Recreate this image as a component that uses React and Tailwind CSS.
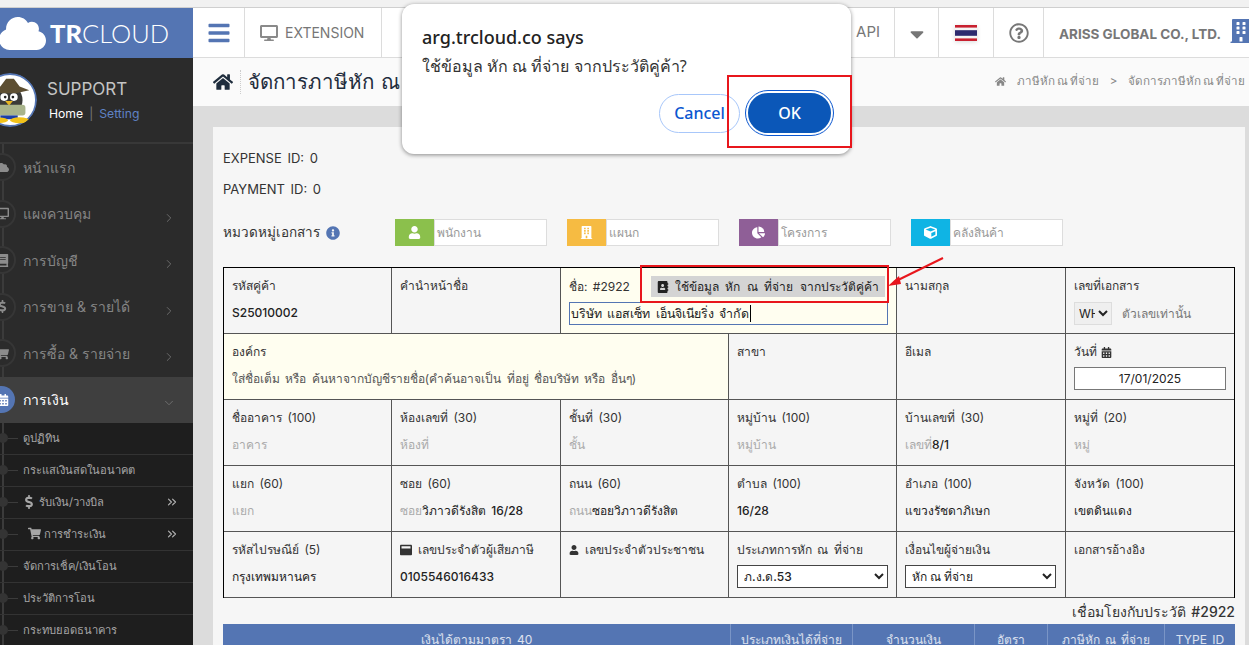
import React from "react";
import {
  FaBars, FaDesktop, FaCaretDown, FaRegQuestionCircle, FaBuilding, FaHome, FaUser, FaChartPie, FaCube,
  FaInfoCircle, FaCalendarAlt, FaShoppingCart, FaDollarSign, FaCloud,
  FaWindowMaximize, FaAddressBook, FaBook,
} from "react-icons/fa";
import { ChevronRight, ChevronDown, ChevronsRight } from "lucide-react";

const menu = [
  { t: "หน้าแรก", I: FaCloud },
  { t: "แผงควบคุม", I: FaDesktop, c: true },
  { t: "การบัญชี", I: FaBook, c: true },
  { t: "การขาย & รายได้", I: FaDollarSign, c: true },
  { t: "การซื้อ & รายจ่าย", I: FaShoppingCart, c: true },
];

const sub = [
  { t: "ดูปฏิทิน" },
  { t: "กระแสเงินสดในอนาคต" },
  { t: "รับเงิน/วางบิล", I: FaDollarSign, d: true },
  { t: "การชำระเงิน", I: FaShoppingCart, d: true, p: true },
  { t: "จัดการเช็ค/เงินโอน" },
  { t: "ประวัติการโอน" },
  { t: "กระทบยอดธนาคาร" },
];

function Penguin() {
  return (
    <svg viewBox="0 0 56 56" className="w-[54px] h-[54px] rounded-full shrink-0 -ml-[17px]">
      <circle cx="28" cy="28" r="27" fill="#fff" stroke="#5475b3" strokeWidth="2" />
      <ellipse cx="27" cy="28" rx="14" ry="15" fill="#3a3a38" />
      <path d="M6 18 L18 14 L24 6 L32 6 L38 14 L48 18 L34 21 L20 21 Z" fill="#5d4f33" />
      <circle cx="22" cy="25" r="4" fill="#fff" />
      <circle cx="32" cy="25" r="4" fill="#fff" />
      <circle cx="23" cy="25" r="1.4" fill="#222" />
      <circle cx="31" cy="25" r="1.4" fill="#222" />
      <path d="M23 29 L31 29 L27 34 Z" fill="#e8b520" />
      <rect x="10" y="33" width="34" height="11" rx="3" fill="#a9b48c" />
      <rect x="18" y="44" width="18" height="4" fill="#1b3fa8" />
      <ellipse cx="16" cy="49" rx="10" ry="3" fill="#f2c21a" />
      <ellipse cx="38" cy="49" rx="10" ry="3" fill="#f2c21a" />
    </svg>
  );
}

function Sidebar() {
  return (
    <aside className="w-[193px] shrink-0 h-[637px] bg-[#2b2b2b] overflow-hidden flex flex-col relative">
      <div className="h-[50px] bg-[#5475b3] flex items-center text-white overflow-hidden shrink-0">
        <FaCloud className="text-[47px] shrink-0 ml-[-1px]" />
        <span className="text-[25.5px] ml-[4px] font-['Lato',sans-serif]"><b className="font-black">TR</b><span className="font-light">CLOUD</span></span>
      </div>
      <div className="h-[86px] flex items-center border-b-2 border-[#383838] shrink-0">
        <Penguin />
        <div className="ml-[10px]">
          <div className="text-[#c4c4c4] text-[17px] leading-6">SUPPORT</div>
          <div className="text-[12.2px] mt-[3px] leading-5 ml-[2px]">
            <span className="text-white">Home</span><span className="text-[#777] mx-[6px]">|</span><span className="text-[#5f82c4]">Setting</span>
          </div>
        </div>
      </div>
      <nav className="relative flex-1 flex flex-col">
        <div className="absolute left-[2px] top-0 bottom-0 w-[2px] bg-[#3b3b3b]" />
        {menu.map(({ t, I, c }) => (
          <div key={t} className="h-[46.5px] shrink-0 flex items-center relative text-[#858585] text-[14px] pr-[17px]">
            <span className="-ml-3 w-7 h-7 rounded-full bg-[#2b2b2b] border-2 border-[#363636] flex items-center justify-end pr-[5px] shrink-0 text-[#8c8c8c] text-[13px]"><I /></span>
            <span className="ml-[7px] flex-1">{t}</span>
            {c && <ChevronRight size={14} strokeWidth={1.4} className="text-[#777] mt-[8px]" />}
          </div>
        ))}
        <div className="h-[46px] shrink-0 flex items-center relative bg-[#3f3f3f] text-white text-[14px] pr-[17px]">
          <span className="-ml-3 w-[27px] h-[27px] rounded-full bg-[#5475b3] flex items-center justify-end pr-[6px] shrink-0 text-[12px]"><FaCalendarAlt /></span>
          <span className="ml-[8px] flex-1">การเงิน</span>
          <ChevronDown size={14} strokeWidth={1.4} className="text-[#777] mt-[6px]" />
        </div>
        <div className="flex-1 bg-[#1e1e1e] relative">
          <div className="absolute left-[2px] top-0 bottom-0 w-[2px] bg-[#3b3b3b]" />
          {sub.map(({ t, I, d, p }) => (
            <div key={t} className="h-8 border-b border-[#333] flex items-center relative text-[#a6a6a6] text-[11.2px] pr-[14px]">
              <span className="w-[10px] h-[10px] rounded-full bg-[#343434] -ml-[2px] shrink-0" />
              <span className="w-[10px] h-px bg-[#3b3b3b] shrink-0" />
              <span className={p ? "ml-[10px] flex items-center flex-1" : "ml-[5px] flex items-center flex-1"}>
                {I && <I className={p ? "mr-[3px] text-[13px]" : "mr-[3px] text-[14px] -ml-[1px]"} />}{t}
              </span>
              {d && <ChevronsRight size={14} strokeWidth={2} className="text-[#b0b0b0]" />}
            </div>
          ))}
        </div>
      </nav>
    </aside>
  );
}

function Flag() {
  return (
    <svg viewBox="0 0 22 16" className="w-[22px] h-4 drop-shadow-sm">
      <rect width="22" height="16" fill="#c8202f" />
      <rect y="2.6" width="22" height="10.8" fill="#f4f4f4" />
      <rect y="5.2" width="22" height="5.6" fill="#2d2a6e" />
    </svg>
  );
}

function TopNav() {
  return (
    <header className="h-[50px] shrink-0 bg-white border-b border-[#dcdcdc] flex items-stretch text-[#777]">
      <div className="w-[52px] border-r border-[#dcdcdc] flex items-center justify-center text-[#5475b3] text-[24px]"><FaBars /></div>
      <div className="w-[137px] border-r border-[#dcdcdc] flex items-center pl-[15px] text-[14px]">
        <FaDesktop className="text-[#8a8a8a] text-[18px] mr-[7px]" />EXTENSION
      </div>
      <div className="flex-1 flex items-center justify-end border-r border-[#dcdcdc] pr-[14px] text-[15px]">API</div>
      <div className="w-[44px] border-r border-[#dcdcdc] flex items-center justify-center text-[22px]"><FaCaretDown className="mt-[2px]" /></div>
      <div className="w-[55px] border-r border-[#dcdcdc] flex items-center justify-center"><Flag /></div>
      <div className="w-[50px] border-r border-[#dcdcdc] flex items-center justify-center text-[20px]"><FaRegQuestionCircle /></div>
      <div className="w-[205px] flex items-center pl-[15px] text-[13.5px] font-bold whitespace-nowrap">
        <span className="w-[172px] shrink-0 mt-[3px]">ARISS GLOBAL CO., LTD.</span>
        <FaBuilding className="text-[#5475b3] text-[24px] shrink-0 -mt-[4px] -ml-[2px]" />
      </div>
    </header>
  );
}

function TitleBar() {
  return (
    <div className="h-[48px] shrink-0 bg-[#fafafa] flex items-center pl-[20px] pr-[4px]">
      <FaHome className="text-[#1f2d3d] text-[20px]" />
      <span className="ml-[7px] pl-[7px] border-l border-dotted border-[#ccc] text-[#1f2d3d] text-[20.5px] leading-6 font-medium [word-spacing:2px]">จัดการภาษีหัก ณ ที่จ่าย</span>
      <div className="ml-auto flex items-center text-[11.6px] text-[#888] [word-spacing:-1.5px]">
        <FaHome className="text-[11px] mr-[11px]" />ภาษีหัก ณ ที่จ่าย<span className="mx-[11px]">&gt;</span>จัดการภาษีหัก ณ ที่จ่าย
      </div>
    </div>
  );
}

const cats = [
  { c: "bg-[#8bc04c]", I: FaUser, t: "พนักงาน" },
  { c: "bg-[#f6bb42]", I: FaBuilding, t: "แผนก" },
  { c: "bg-[#8f5f97]", I: FaChartPie, t: "โครงการ" },
  { c: "bg-[#0fb4e4]", I: FaCube, t: "คลังสินค้า" },
];

function Cell({ label, children, className = "", icon }) {
  return (
    <div className={"h-[66px] px-2 pt-2 border-r border-b border-[#555] min-w-0 " + className}>
      <div className="h-5 leading-5 text-[#333] text-[12px] flex items-center whitespace-nowrap">{icon}{label}</div>
      <div className="mt-[7px] h-5 leading-5 text-[12px] text-[#222] font-medium whitespace-nowrap">{children}</div>
    </div>
  );
}

const Ph = ({ children }) => <span className="text-[#aaa] font-normal">{children}</span>;

const selectCls = "w-[151px] h-[23px] bg-white border border-[#444] text-[12px] text-[#222] pl-[2px] rounded-none -mt-[2px] block";

function FormTable() {
  return (
    <div className="border border-black border-b-0 w-[1012px]">
      <div className="grid grid-cols-[168px_169px_168px_168px_169px_168px]">
        <Cell label="รหัสคู่ค้า" className="bg-[#f5f5f5]">S25010002</Cell>
        <Cell label="คำนำหน้าชื่อ" className="bg-[#f5f5f5]" />
        <div className="col-span-2 h-[66px] bg-[#fffef0] border-r border-b border-[#555] pl-2 pr-2 pt-2">
          <div className="h-[21px] flex items-center text-[12px] text-[#333]">
            <span className="w-[82px] shrink-0">ชื่อ: #2922</span>
            <span className="h-[21px] bg-[#d4d4d4] w-[234px] flex items-center pl-[6px] text-[#222] text-[12px] [word-spacing:3px] whitespace-nowrap"><FaAddressBook className="mr-[6px] text-[12px]" />ใช้ข้อมูล หัก ณ ที่จ่าย จากประวัติคู่ค้า</span>
          </div>
          <div className="mt-[5px] h-[23px] w-[319px] border border-[#5475b3] text-[12.4px] text-[#222] pl-[1px] leading-[21px] flex items-center whitespace-nowrap">บริษัท แอสเซ็ท เอ็นจิเนียริ่ง จำกัด<span className="w-px h-[17px] bg-black ml-[1px]" /></div>
        </div>
        <Cell label="นามสกุล" className="bg-[#f5f5f5]" />
        <div className="h-[66px] px-2 pt-2 border-b border-[#555] bg-[#f5f5f5]">
          <div className="h-5 leading-5 text-[#333] text-[12px]">เลขที่เอกสาร</div>
          <div className="mt-[6px] flex items-center text-[12px] text-[#777]">
            <select className="w-[38px] h-[23px] bg-[#efefef] border border-[#ddd] text-[12px] text-[#222] mr-[10px]"><option>WHT</option></select>
            ตัวเลขเท่านั้น
          </div>
        </div>

        <div className="col-span-3 h-[66px] bg-[#fffef0] border-r border-b border-[#555] px-2 pt-2">
          <div className="h-5 leading-5 text-[#333] text-[12px]">องค์กร</div>
          <div className="mt-[7px] h-5 leading-5 text-[12px] text-[#555]">ใส่ชื่อเต็ม หรือ ค้นหาจากบัญชีรายชื่อ(คำค้นอาจเป็น ที่อยู่ ชื่อบริษัท หรือ อื่นๆ)</div>
        </div>
        <Cell label="สาขา" className="bg-[#f5f5f5]" />
        <Cell label="อีเมล" className="bg-[#f5f5f5]" />
        <div className="h-[66px] px-2 pt-2 border-b border-[#555] bg-[#f5f5f5]">
          <div className="h-5 leading-5 text-[#333] text-[12px] flex items-center">วันที่<FaCalendarAlt className="ml-[4px] text-[11px]" /></div>
          <div className="mt-[5px] w-[152px] h-[23px] bg-white border border-[#777] text-center text-[12px] text-[#222] leading-[21px]">17/01/2025</div>
        </div>

        <Cell label="ชื่ออาคาร (100)" className="bg-[#f5f5f5]"><Ph>อาคาร</Ph></Cell>
        <Cell label="ห้องเลขที่ (30)" className="bg-[#f5f5f5]"><Ph>ห้องที่</Ph></Cell>
        <Cell label="ชั้นที่ (30)" className="bg-[#f5f5f5]"><Ph>ชั้น</Ph></Cell>
        <Cell label="หมู่บ้าน (100)" className="bg-[#f5f5f5]"><Ph>หมู่บ้าน</Ph></Cell>
        <Cell label="บ้านเลขที่ (30)" className="bg-[#f5f5f5]"><Ph>เลขที่</Ph>8/1</Cell>
        <div className="h-[66px] px-2 pt-2 border-b border-[#555] bg-[#f5f5f5]">
          <div className="h-5 leading-5 text-[#333] text-[12px]">หมู่ที่ (20)</div>
          <div className="mt-[7px] h-5 leading-5 text-[12px]"><Ph>หมู่</Ph></div>
        </div>

        <Cell label="แยก (60)" className="bg-[#f5f5f5]"><Ph>แยก</Ph></Cell>
        <Cell label="ซอย (60)" className="bg-[#f5f5f5]"><Ph>ซอย</Ph>วิภาวดีรังสิต 16/28</Cell>
        <Cell label="ถนน (60)" className="bg-[#f5f5f5]"><Ph>ถนน</Ph>ซอยวิภาวดีรังสิต</Cell>
        <Cell label="ตำบล (100)" className="bg-[#f5f5f5]">16/28</Cell>
        <Cell label="อำเภอ (100)" className="bg-[#f5f5f5]">แขวงรัชดาภิเษก</Cell>
        <div className="h-[66px] px-2 pt-2 border-b border-[#555] bg-[#f5f5f5]">
          <div className="h-5 leading-5 text-[#333] text-[12px]">จังหวัด (100)</div>
          <div className="mt-[7px] h-5 leading-5 text-[12px] text-[#222] font-medium">เขตดินแดง</div>
        </div>

        <Cell label="รหัสไปรษณีย์ (5)" className="bg-[#f5f5f5]">กรุงเทพมหานคร</Cell>
        <Cell label="เลขประจำตัวผู้เสียภาษี" className="bg-[#f5f5f5]" icon={<FaWindowMaximize className="mr-[6px] text-[12px]" />}>0105546016433</Cell>
        <Cell label="เลขประจำตัวประชาชน" className="bg-[#f5f5f5]" icon={<FaUser className="mr-[6px] text-[10px]" />} />
        <Cell label="ประเภทการหัก ณ ที่จ่าย" className="bg-[#f5f5f5]"><select className={selectCls}><option>ภ.ง.ด.53</option></select></Cell>
        <Cell label="เงื่อนไขผู้จ่ายเงิน" className="bg-[#f5f5f5]"><select className={selectCls}><option>หัก ณ ที่จ่าย</option></select></Cell>
        <div className="h-[66px] px-2 pt-2 border-b border-[#555] bg-[#f5f5f5]">
          <div className="h-5 leading-5 text-[#333] text-[12px]">เอกสารอ้างอิง</div>
        </div>
      </div>
    </div>
  );
}

function Content() {
  return (
    <div className="flex-1 bg-[#dcdcdc] pl-5 pr-1 pt-[21px] overflow-hidden min-h-0">
      <div className="bg-[#f6f6f6] h-[600px] pl-[10px] pt-[20px] pr-[10px] [word-spacing:2px] font-['Inter','Noto_Sans',sans-serif]">
        <div className="h-[22px] leading-[22px] text-[13px] text-[#333]">EXPENSE ID: 0</div>
        <div className="mt-[9px] h-[22px] leading-[22px] text-[13px] text-[#333]">PAYMENT ID: 0</div>
        <div className="mt-[19px] h-[27px] flex items-center">
          <div className="w-[172px] flex items-center text-[13.5px] text-[#333] font-medium">หมวดหมู่เอกสาร<FaInfoCircle className="text-[#5475b3] text-[14px] ml-[6px]" /></div>
          <div className="flex gap-5">
            {cats.map(({ c, I, t }) => (
              <div key={t} className="flex w-[152px] h-[27px]">
                <span className={"w-[39px] flex items-center justify-center text-white text-[13px] " + c}><I /></span>
                <span className="flex-1 bg-white border border-[#ddd] pl-[2px] text-[12px] text-[#999] leading-[25px]">{t}</span>
              </div>
            ))}
          </div>
        </div>
        <div className="mt-[21px]"><FormTable /></div>
        <div className="w-[1012px] h-[26px] flex items-center justify-end text-[14px] text-[#333] font-medium">เชื่อมโยงกับประวัติ #2922</div>
        <div className="w-[1012px] h-[40px] bg-[#5475b3] grid grid-cols-[507px_122px_122px_73px_117px_71px] text-white/80 text-[12px] leading-[32px] text-center">
          <div>เงินได้ตามมาตรา 40</div>
          <div className="border-l border-[#7a95c6]">ประเภทเงินได้ที่จ่าย</div>
          <div className="border-l border-[#7a95c6]">จำนวนเงิน</div>
          <div className="border-l border-[#7a95c6]">อัตรา</div>
          <div className="border-l border-[#7a95c6]">ภาษีหัก ณ ที่จ่าย</div>
          <div className="border-l border-[#7a95c6]">TYPE ID</div>
        </div>
      </div>
    </div>
  );
}

function Dialog() {
  return (
    <div className="absolute left-[402px] top-[4px] w-[449px] h-[150px] bg-white rounded-[12px] shadow-[0_1px_4px_rgba(0,0,0,0.45)] font-['Noto_Sans',sans-serif]">
      <div className="pt-[21px] pl-[20px] text-[18px] leading-6 font-medium text-[#222]">arg.trcloud.co says</div>
      <div className="pl-[20px] pt-[5px] text-[16px] leading-6 text-[#333]">ใช้ข้อมูล หัก ณ ที่จ่าย จากประวัติคู่ค้า?</div>
      <div className="flex justify-end items-center pr-[18px] pt-[13px] gap-[6px]">
        <button className="w-[81px] h-[39px] rounded-full border border-[#a8c7fa] bg-white text-[#0b57d0] text-[16px] font-medium">Cancel</button>
        <button className="w-[87px] h-[44px] rounded-full bg-[#0b57b8] border-2 border-white outline-1 outline-[#0b57d0] text-white text-[16px] font-medium">OK</button>
      </div>
    </div>
  );
}

export default function App() {
  return (
    <div className="relative w-[1249px] h-[645px] overflow-hidden bg-[#f1f1f1] font-['Inter','Noto_Sans',sans-serif]">
      <div className="h-2 bg-[#f1f1f1] border-b border-[#cfcfcf]" />
      <div className="flex h-[637px]">
        <Sidebar />
        <main className="flex-1 min-w-0 flex flex-col">
          <TopNav />
          <TitleBar />
          <Content />
        </main>
      </div>
      <Dialog />
      <div className="absolute left-[727px] top-[75px] w-[125px] h-[73px] border-2 border-[#e8161c]" />
      <div className="absolute left-[640px] top-[265px] w-[249px] h-[38px] border-2 border-[#e8161c]" />
      <svg className="absolute left-[880px] top-[250px] w-[70px] h-[45px]" viewBox="0 0 70 45">
        <path d="M63 8 L14 32" stroke="#e8161c" strokeWidth="2" fill="none" />
        <path d="M8 36 L19 26 L21 34 Z" fill="#e8161c" />
      </svg>
    </div>
  );
}
